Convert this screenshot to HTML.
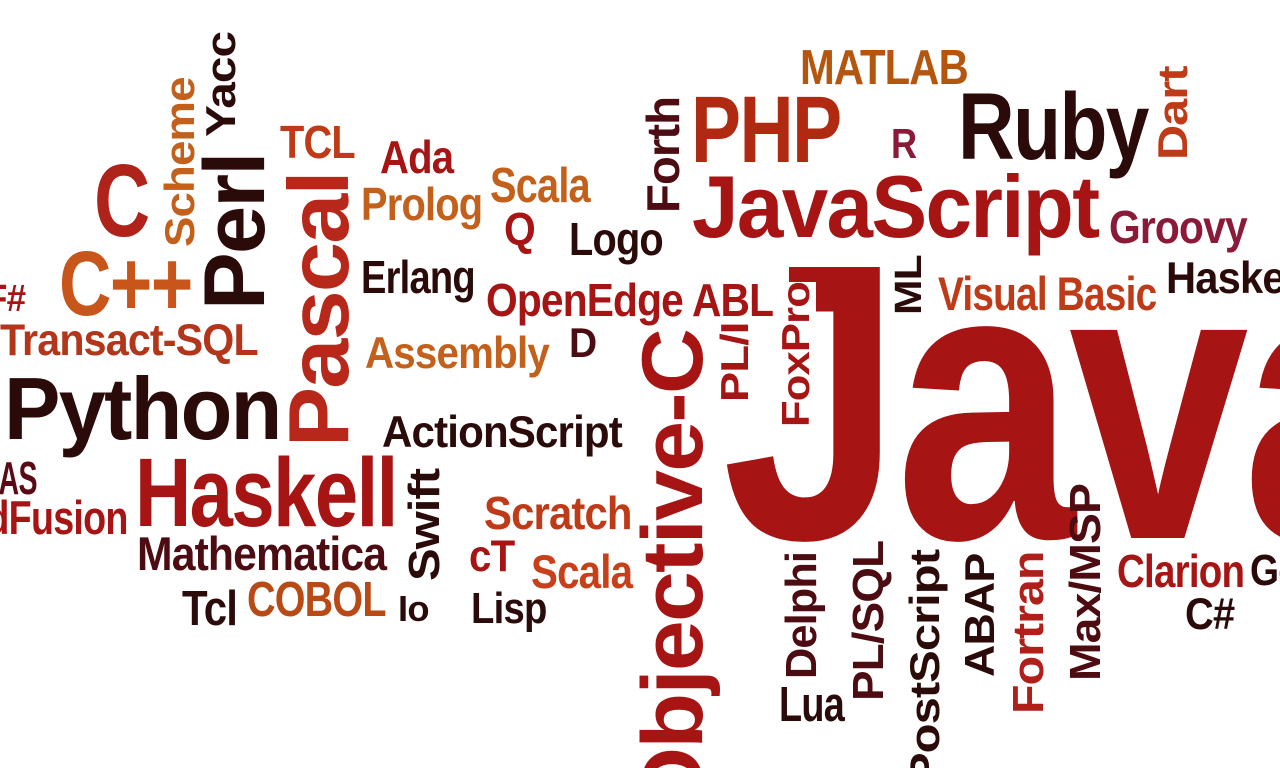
<!DOCTYPE html>
<html><head><meta charset="utf-8"><style>
html,body{margin:0;padding:0;background:#fff;width:1280px;height:768px;overflow:hidden;position:relative}
#w{position:absolute;left:0;top:0;width:1280px;height:768px;overflow:hidden}
b{position:absolute;white-space:nowrap;line-height:1;font-family:"Liberation Sans",Arial,sans-serif;font-weight:bold;transform-origin:0 0;letter-spacing:-0.02em}
.k{color:#2b0a0a}.m{color:#4c0c12}.r{color:#a61414}.o{color:#bf3a16}.y{color:#c3611c}.p{color:#8b1a38}
</style></head><body><div id="w">
<b class="r" g="722,258,540,694">Java</b>
<b class="y" g="800,50,85,168" style="color:#b5560f">MATLAB</b>
<b class="o" g="691,95,163,150" style="color:#b02a12">PHP</b>
<b class="p" g="891,128,158,25">R</b>
<b class="k" g="958,92,160,190">Ruby</b>
<b class="o" r="1157,1187,160,67">Dart</b>
<b class="r" g="692,175,238,406">JavaScript</b>
<b class="p" g="1109,210,243,138">Groovy</b>
<b class="k" g="1166,263,295,140">Haskell</b>
<b class="o" g="938,277,311,218">Visual Basic</b>
<b class="k" r="895,922,315,255">ML</b>
<b class="r" g="486,283,316,287">OpenEdge ABL</b>
<b class="r" r="782,810,427,282" style="background:#fff">FoxPro</b>
<b class="r" r="721,749,402,322">PL/I</b>
<b class="r" r="641,703,818,330">Objective-C</b>
<b class="r" g="1117,554,587,127">Clarion</b>
<b class="k" g="1250,556,587,50">Go</b>
<b class="k" g="1185,599,631,49">C#</b>
<b class="m" r="1071,1102,681,484">Max/MSP</b>
<b class="o" r="1014,1045,714,552" style="color:#b0201a">Fortran</b>
<b class="k" r="964,994,677,554">ABAP</b>
<b class="k" r="909,939,785,550">PostScript</b>
<b class="m" r="854,885,701,541">PL/SQL</b>
<b class="m" r="787,818,679,552">Delphi</b>
<b class="k" g="779,687,722,65">Lua</b>
<b class="k" r="205,235,137,32">Yacc</b>
<b class="y" r="164,194,247,77">Scheme</b>
<b class="k" r="203,265,310,153">Perl</b>
<b class="r" g="94,163,237,55" style="color:#b0231a">C</b>
<b class="y" g="59,250,316,133" style="color:#c8561a">C++</b>
<b class="r" g="-14,285,312,39">F#</b>
<b class="o" g="0,325,357,258" style="color:#b3361a">Transact-SQL</b>
<b class="r" r="288,349,447,172" style="color:#b8281a">Pascal</b>
<b class="o" g="280,125,158,75">TCL</b>
<b class="r" g="380,140,173,73">Ada</b>
<b class="y" g="361,187,220,121">Prolog</b>
<b class="y" g="490,168,203,100">Scala</b>
<b class="r" g="504,212,245,31">Q</b>
<b class="k" g="569,222,255,94">Logo</b>
<b class="m" r="646,679,213,97">Forth</b>
<b class="k" g="361,260,293,114">Erlang</b>
<b class="m" g="569,327,357,27">D</b>
<b class="y" g="365,338,370,184">Assembly</b>
<b class="k" g="4,377,440,277">Python</b>
<b class="m" g="-20,461,494,57" style="color:#5a0a14">SAS</b>
<b class="r" g="-72,501,535,200">ColdFusion</b>
<b class="r" g="135,457,527,262">Haskell</b>
<b class="k" g="382,417,449,240">ActionScript</b>
<b class="k" r="410,441,581,469">Swift</b>
<b class="o" g="484,496,529,148">Scratch</b>
<b class="m" g="137,537,571,249">Mathematica</b>
<b class="r" g="469,541,573,45">cT</b>
<b class="o" g="531,555,589,101" style="color:#c8401a">Scala</b>
<b class="k" g="182,591,626,55">Tcl</b>
<b class="y" g="247,582,617,139" style="color:#b84a16">COBOL</b>
<b class="k" g="398,596,622,31">Io</b>
<b class="k" g="471,594,625,76">Lisp</b>
</div>
<script>
document.querySelectorAll('b').forEach(function(e){
  var g=e.getAttribute('g'),r=e.getAttribute('r');
  if(g){
    var a=g.split(',').map(Number),x=a[0],c=a[1],bb=a[2],w=a[3];
    var fs=(bb-c)/0.716;
    e.style.fontSize=fs+'px';e.style.left=x+'px';e.style.top=(c-0.131*fs)+'px';
    var nw=e.offsetWidth;e.style.transform='scaleX('+(w/nw)+')';
  }else if(r){
    var a=r.split(',').map(Number),x1=a[0],x2=a[1],yb=a[2],yt=a[3];
    var fs=(x2-x1)/0.716;
    e.style.fontSize=fs+'px';e.style.left=(x1-0.131*fs)+'px';e.style.top=yb+'px';
    var nw=e.offsetWidth;e.style.transform='rotate(-90deg) scaleX('+((yb-yt)/nw)+')';
  }
});
</script>
</body></html>
